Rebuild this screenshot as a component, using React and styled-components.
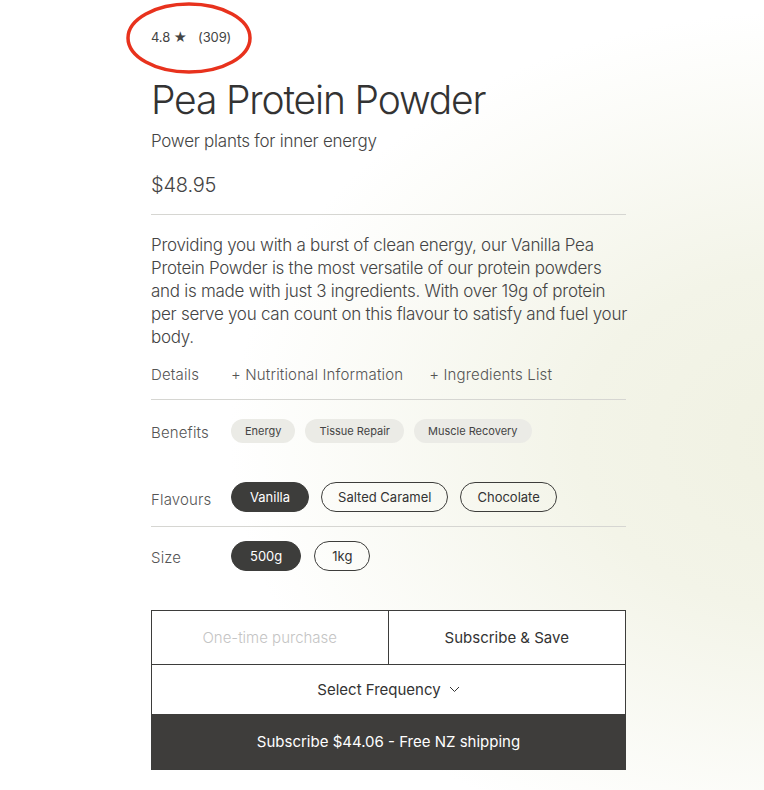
import React from "react";
import styled, { createGlobalStyle } from "styled-components";

const GlobalStyle = createGlobalStyle`
  *, *::before, *::after {
    box-sizing: border-box;
  }
  html, body {
    margin: 0;
    padding: 0;
  }
  body {
    font-family: Inter, "Noto Sans", sans-serif;
    color: #3d3d3b;
    background: #fff;
  }
`;

const Page = styled.div`
  position: relative;
  width: 764px;
  height: 790px;
  overflow: hidden;
  background: radial-gradient(
    ellipse 580px 430px at 810px 440px,
    #f0f1e2 0%,
    #f3f4e8 40%,
    rgba(255, 255, 255, 0) 100%
  ),
  #fff;
`;

const Column = styled.div`
  width: 475px;
  margin-left: 151px;
  padding-top: 28px;
  display: flex;
  flex-direction: column;
`;

const Rating = styled.div`
  font-size: 13px;
  letter-spacing: -0.01em;
  color: #444;
  display: flex;
  gap: 11px;
  height: 18px;
  align-items: center;
`;

const Highlight = styled.svg`
  position: absolute;
  left: 126px;
  top: 2px;
  pointer-events: none;
`;

const Title = styled.h1`
  margin: 32px 0 0;
  font-size: 39px;
  font-weight: 300;
  letter-spacing: -0.03em;
  line-height: 44px;
  color: #333;
`;

const Subtitle = styled.p`
  margin: 7px 0 0;
  font-size: 17px;
  font-weight: 300;
  letter-spacing: -0.015em;
  color: #444;
  line-height: 24px;
`;

const Price = styled.div`
  margin-top: 19px;
  font-size: 20px;
  font-weight: 300;
  letter-spacing: -0.01em;
  color: #444;
  line-height: 26px;
`;

const Rule = styled.hr`
  border: 0;
  border-top: 1px solid #d6d6d2;
  margin: ${(p) => p.$m || "0"};
  width: 100%;
`;

const Description = styled.p`
  margin: 19px 0 0;
  width: 490px;
  font-size: 17px;
  font-weight: 300;
  letter-spacing: -0.016em;
  line-height: 23px;
  color: #444;
`;

const Row = styled.div`
  display: flex;
  align-items: center;
  height: ${(p) => p.$h}px;
  padding-top: ${(p) => p.$pt || 0}px;
  margin-top: ${(p) => p.$mt || 0}px;
`;

const Label = styled.span`
  width: 80px;
  flex-shrink: 0;
  font-size: 15px;
  font-weight: 300;
  letter-spacing: 0.01em;
  color: #555;
  margin-top: ${(p) => p.$offset || 0}px;
`;

const Links = styled.div`
  display: flex;
  gap: 26px;
`;

const DetailLink = styled.a`
  font-size: 15px;
  font-weight: 300;
  letter-spacing: 0.01em;
  color: #555;
  text-decoration: none;
  cursor: pointer;
`;

const Chips = styled.div`
  display: flex;
  gap: ${(p) => p.$gap}px;
`;

const Benefit = styled.span`
  height: 24px;
  padding: 0 14px;
  border-radius: 12px;
  background: #ebebe6;
  font-size: 11px;
  color: #444;
  display: inline-flex;
  align-items: center;
`;

const Option = styled.button`
  height: 30px;
  padding: 0 ${(p) => p.$pad}px;
  border-radius: 15px;
  font-family: inherit;
  font-size: 13px;
  letter-spacing: 0;
  border: 1px solid #3d3d3b;
  background: ${(p) => (p.$active ? "#3d3d3b" : "transparent")};
  color: ${(p) => (p.$active ? "#fff" : "#333")};
  cursor: pointer;
`;

const Purchase = styled.div`
  margin-top: 25px;
  border: 1px solid #3d3d3b;
  background: #fff;
  display: grid;
  grid-template-columns: 1fr 1fr;
`;

const Mode = styled.button`
  height: 54px;
  border: 0;
  border-right: ${(p) => (p.$first ? "1px solid #3d3d3b" : "0")};
  border-bottom: 1px solid #3d3d3b;
  background: #fff;
  font-family: inherit;
  font-size: 15px;
  letter-spacing: 0;
  color: ${(p) => (p.$active ? "#333" : "#c4c4c4")};
  font-weight: ${(p) => (p.$active ? 400 : 300)};
  cursor: pointer;
`;

const Frequency = styled.button`
  grid-column: 1 / 3;
  height: 49px;
  border: 0;
  background: #fff;
  font-family: inherit;
  font-size: 15px;
  letter-spacing: 0;
  color: #333;
  display: flex;
  align-items: center;
  justify-content: center;
  gap: 8px;
  cursor: pointer;
`;

const Submit = styled.button`
  grid-column: 1 / 3;
  height: 55px;
  border: 0;
  background: #3e3d3b;
  color: #fff;
  font-family: inherit;
  font-size: 15px;
  letter-spacing: 0;
  cursor: pointer;
`;

export default function App() {
  return (
    <Page>
      <GlobalStyle />
      <Highlight width="128" height="74" viewBox="0 0 128 74">
        <ellipse cx="63" cy="36" rx="61" ry="34" fill="none" stroke="#e8321d" strokeWidth="3.5" />
      </Highlight>
      <Column>
        <Rating>
          <span>4.8 ★</span>
          <span>(309)</span>
        </Rating>
        <Title>Pea Protein Powder</Title>
        <Subtitle>Power plants for inner energy</Subtitle>
        <Price>$48.95</Price>
        <Rule $m="16px 0 0" />
        <Description>
          Providing you with a burst of clean energy, our Vanilla Pea
          <br />
          Protein Powder is the most versatile of our protein powders
          <br />
          and is made with just 3 ingredients. With over 19g of protein
          <br />
          per serve you can count on this flavour to satisfy and fuel your
          <br />
          body.
        </Description>
        <Row $h={30} $mt={10}>
          <Label>Details</Label>
          <Links>
            <DetailLink>+ Nutritional Information</DetailLink>
            <DetailLink>+ Ingredients List</DetailLink>
          </Links>
        </Row>
        <Rule $m="10px 0 0" />
        <Row $h={62}>
          <Label $offset={2}>Benefits</Label>
          <Chips $gap={10}>
            <Benefit>Energy</Benefit>
            <Benefit>Tissue Repair</Benefit>
            <Benefit>Muscle Recovery</Benefit>
          </Chips>
        </Row>
        <Row $h={64} $pt={6}>
          <Label $offset={4}>Flavours</Label>
          <Chips $gap={12}>
            <Option $active $pad={18}>Vanilla</Option>
            <Option $pad={16}>Salted Caramel</Option>
            <Option $pad={16}>Chocolate</Option>
          </Chips>
        </Row>
        <Rule $m="0" />
        <Row $h={58}>
          <Label $offset={2}>Size</Label>
          <Chips $gap={13}>
            <Option $active $pad={18}>500g</Option>
            <Option $pad={17}>1kg</Option>
          </Chips>
        </Row>
        <Purchase>
          <Mode $first>One-time purchase</Mode>
          <Mode $active>Subscribe &amp; Save</Mode>
          <Frequency>
            Select Frequency
            <svg width="11" height="7" viewBox="0 0 11 7">
              <path d="M1 1l4.5 4.5L10 1" fill="none" stroke="#333" strokeWidth="1" />
            </svg>
          </Frequency>
          <Submit>Subscribe $44.06 - Free NZ shipping</Submit>
        </Purchase>
      </Column>
    </Page>
  );
}
